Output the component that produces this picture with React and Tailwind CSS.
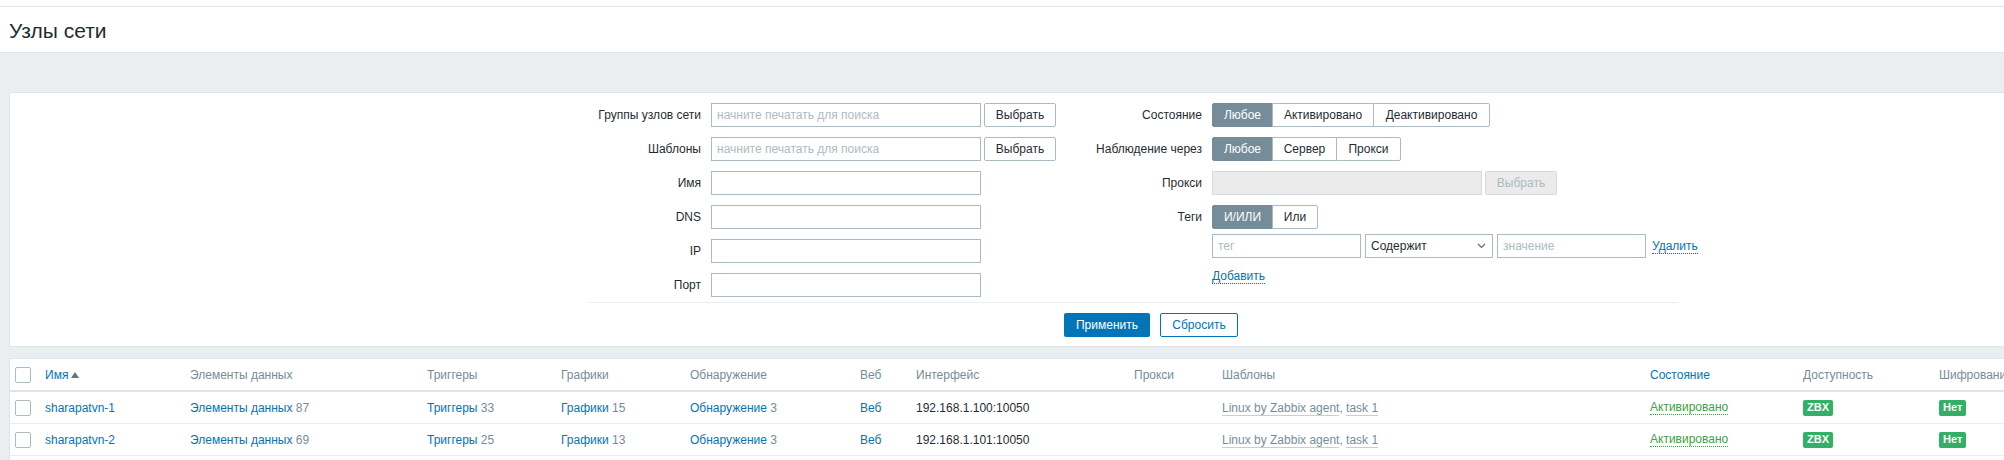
import React from 'react';

const LINK = 'text-[#0275b8]';

const Input = ({ w, placeholder, disabled }) => (
  <div
    className={`h-[24px] ${w} border ${
      disabled ? 'border-[#d6dadd] bg-[#ebebeb]' : 'border-[#acbbc2] bg-white'
    } px-[5px] flex items-center text-[#acbbc2]`}
  >
    {placeholder}
  </div>
);

const GreyButton = ({ disabled }) => (
  <div
    className={`h-[24px] w-[72px] ml-[3px] border rounded-[2px] flex items-center justify-center ${
      disabled ? 'border-[#d6dadd] bg-[#ebebeb] text-[#acbbc2]' : 'border-[#acbbc2] bg-white text-[#1f2c33]'
    }`}
  >
    Выбрать
  </div>
);

const Segments = ({ items }) => (
  <div className="flex h-[24px]">
    {items.map(([label, w], i) => (
      <div
        key={label}
        className={`${w} flex items-center justify-center border ${
          i === 0
            ? 'bg-[#768d99] border-[#768d99] text-white rounded-l-[2px]'
            : 'bg-white border-[#acbbc2] text-[#1f2c33] -ml-px'
        } ${i === items.length - 1 ? 'rounded-r-[2px]' : ''}`}
      >
        {label}
      </div>
    ))}
  </div>
);

const LeftRow = ({ label, children }) => (
  <div className="flex items-center h-[24px]">
    <div className="w-[123px] pr-[10px] text-right text-[#1f2c33] whitespace-nowrap">{label}</div>
    {children}
  </div>
);

const RightRow = ({ label, children }) => (
  <div className="flex items-center h-[24px]">
    <div className="w-[136px] pr-[10px] text-right text-[#1f2c33] whitespace-nowrap">{label}</div>
    {children}
  </div>
);

const Checkbox = () => <div className="w-[16px] h-[16px] border border-[#acbbc2] rounded-[2px] bg-white" />;

const cols = [
  'w-[29px] pl-[5px]',
  'w-[145px] pl-[6px]',
  'w-[237px] pl-[6px]',
  'w-[134px] pl-[6px]',
  'w-[129px] pl-[6px]',
  'w-[170px] pl-[6px]',
  'w-[56px] pl-[6px]',
  'w-[218px] pl-[6px]',
  'w-[88px] pl-[6px]',
  'w-[428px] pl-[6px]',
  'w-[153px] pl-[6px]',
  'w-[136px] pl-[6px]',
  'w-[160px] pl-[6px]',
];

const hosts = [
  { name: 'sharapatvn-1', items: 87, triggers: 33, graphs: 15, disc: 3, iface: '192.168.1.100:10050' },
  { name: 'sharapatvn-2', items: 69, triggers: 25, graphs: 13, disc: 3, iface: '192.168.1.101:10050' },
];

const Badge = ({ children }) => (
  <span className="inline-flex items-center h-[16px] px-[4px] rounded-[2px] bg-[#34af67] text-white text-[11px] font-bold leading-none">
    {children}
  </span>
);

export default function App() {
  const headers = [
    <Checkbox key="cb" />,
    <span key="n" className={`${LINK} flex items-center gap-[3px]`}>
      Имя
      <svg width="8" height="6" viewBox="0 0 8 6">
        <path d="M0 6 L4 0 L8 6 Z" fill="#5b7684" />
      </svg>
    </span>,
    'Элементы данных',
    'Триггеры',
    'Графики',
    'Обнаружение',
    'Веб',
    'Интерфейс',
    'Прокси',
    'Шаблоны',
    <span key="s" className={LINK}>Состояние</span>,
    'Доступность',
    'Шифрование',
  ];

  return (
    <div className="w-[2004px] min-h-[460px] overflow-hidden bg-[#ebeef0] font-['Liberation_Sans',Arial,sans-serif] text-[12px] text-[#1f2c33]">
      <div className="w-[2320px]">
        {/* Header */}
        <div className="h-[6px] bg-white" />
        <div className="h-[47px] bg-white border-t border-[#e3e3e3] border-b border-b-[#dfe4e7] flex items-center pl-[9px]">
          <h1 className="text-[21px] text-[#1f2c33] leading-none mt-[1px]">Узлы сети</h1>
        </div>

        {/* Filter */}
        <div className="ml-[9px] mt-[39px] w-[2284px] bg-white border border-[#dfe4e7]">
          <div className="ml-[578px] w-[1090px] pt-[10px]">
            <div className="flex">
              <div className="flex flex-col gap-[10px]">
                <LeftRow label="Группы узлов сети">
                  <Input w="w-[270px]" placeholder="начните печатать для поиска" />
                  <GreyButton />
                </LeftRow>
                <LeftRow label="Шаблоны">
                  <Input w="w-[270px]" placeholder="начните печатать для поиска" />
                  <GreyButton />
                </LeftRow>
                <LeftRow label="Имя">
                  <Input w="w-[270px]" />
                </LeftRow>
                <LeftRow label="DNS">
                  <Input w="w-[270px]" />
                </LeftRow>
                <LeftRow label="IP">
                  <Input w="w-[270px]" />
                </LeftRow>
                <LeftRow label="Порт">
                  <Input w="w-[270px]" />
                </LeftRow>
              </div>

              <div className="ml-[20px] flex flex-col">
                <div className="flex flex-col gap-[10px]">
                  <RightRow label="Состояние">
                    <Segments items={[['Любое', 'w-[61px]'], ['Активировано', 'w-[102px]'], ['Деактивировано', 'w-[117px]']]} />
                  </RightRow>
                  <RightRow label="Наблюдение через">
                    <Segments items={[['Любое', 'w-[61px]'], ['Сервер', 'w-[65px]'], ['Прокси', 'w-[65px]']]} />
                  </RightRow>
                  <RightRow label="Прокси">
                    <Input w="w-[270px]" disabled />
                    <GreyButton disabled />
                  </RightRow>
                  <RightRow label="Теги">
                    <Segments items={[['И/ИЛИ', 'w-[61px]'], ['Или', 'w-[46px]']]} />
                  </RightRow>
                </div>
                <div className="flex items-center h-[24px] mt-[5px] ml-[136px]">
                  <Input w="w-[149px]" placeholder="тег" />
                  <div className="ml-[4px] w-[128px] h-[24px] border border-[#acbbc2] bg-white px-[5px] flex items-center justify-between">
                    <span>Содержит</span>
                    <svg width="9" height="6" viewBox="0 0 9 6" className="mr-[1px]">
                      <path d="M1 1 L4.5 4.5 L8 1" fill="none" stroke="#5b6b73" strokeWidth="1.2" />
                    </svg>
                  </div>
                  <div className="ml-[4px]">
                    <Input w="w-[149px]" placeholder="значение" />
                  </div>
                  <span className={`ml-[6px] ${LINK} border-b border-dotted border-[#0275b8] leading-[14px]`}>Удалить</span>
                </div>
                <div className="ml-[136px] mt-[9px]">
                  <span className={`${LINK} border-b border-dotted border-[#0275b8] leading-[14px]`}>Добавить</span>
                </div>
              </div>
            </div>
            <div className="mt-[5px] border-t border-[#ebeef0]" />
          </div>
          <div className="flex justify-center gap-[10px] pt-[10px] pb-[9px]">
            <div className="h-[24px] w-[86px] rounded-[2px] bg-[#0275b8] text-white flex items-center justify-center">
              Применить
            </div>
            <div className="h-[24px] w-[78px] rounded-[2px] border border-[#0275b8] bg-white text-[#0275b8] flex items-center justify-center">
              Сбросить
            </div>
          </div>
        </div>

        {/* Table */}
        <div className="ml-[9px] mt-[11px] w-[2284px] bg-white border-l border-t border-[#dfe4e7] min-h-[120px]">
          <div className="flex h-[33px] border-b-2 border-[#dfe4e7] text-[#768d99]">
            {headers.map((h, i) => (
              <div key={i} className={`${cols[i]} flex items-center shrink-0 whitespace-nowrap`}>
                {h}
              </div>
            ))}
          </div>
          {hosts.map((h) => {
            const cells = [
              <Checkbox key="cb" />,
              <span key="n" className={LINK}>{h.name}</span>,
              <span key="i">
                <span className={LINK}>Элементы данных</span> <span className="text-[#768d99]">{h.items}</span>
              </span>,
              <span key="t">
                <span className={LINK}>Триггеры</span> <span className="text-[#768d99]">{h.triggers}</span>
              </span>,
              <span key="g">
                <span className={LINK}>Графики</span> <span className="text-[#768d99]">{h.graphs}</span>
              </span>,
              <span key="d">
                <span className={LINK}>Обнаружение</span> <span className="text-[#768d99]">{h.disc}</span>
              </span>,
              <span key="w" className={LINK}>Веб</span>,
              <span key="if">{h.iface}</span>,
              '',
              <span key="tp" className="text-[#768d99]">
                <span className="border-b border-[#c5d0d6]">Linux by Zabbix agent</span>,{' '}
                <span className="border-b border-[#c5d0d6]">task 1</span>
              </span>,
              <span key="st" className="text-[#429e47] border-b border-dotted border-[#429e47] leading-[14px]">
                Активировано
              </span>,
              <Badge key="a">ZBX</Badge>,
              <Badge key="e">Нет</Badge>,
            ];
            return (
              <div key={h.name} className="flex h-[32px] border-b border-[#ebeef0]">
                {cells.map((c, i) => (
                  <div key={i} className={`${cols[i]} flex items-center shrink-0 whitespace-nowrap`}>
                    {c}
                  </div>
                ))}
              </div>
            );
          })}
        </div>
      </div>
    </div>
  );
}
